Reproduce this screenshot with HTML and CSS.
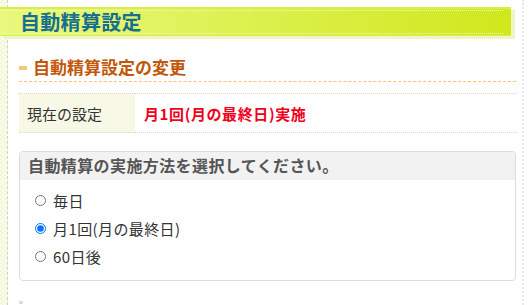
FILE: index.html
```html
<!DOCTYPE html>
<html lang="ja">
<head>
<meta charset="utf-8">
<link rel="stylesheet" href="styles.css">
</head>
<body>
<div class="page">
  <div class="side-left"></div>
  <div class="main">
    <div class="title-bar"><h1>自動精算設定</h1></div>
    <div class="content">
      <h2 class="sec-head"><span class="mark"></span>自動精算設定の変更</h2>
      <table class="info">
        <tr><th>現在の設定</th><td>月1回(月の最終日)実施</td></tr>
      </table>
      <div class="box">
        <div class="box-head">自動精算の実施方法を選択してください。</div>
        <div class="box-body">
          <label class="opt"><input type="radio" name="m"> 毎日</label>
          <label class="opt"><input type="radio" name="m" checked> 月1回(月の最終日)</label>
          <label class="opt"><input type="radio" name="m"> 60日後</label>
        </div>
      </div>
      <div class="next"></div>
    </div>
  </div>
  <div class="side-right"></div>
</div>
</body>
</html>
```
FILE: styles.css
```css
html, body { margin: 0; padding: 0; background: #fff; }
body { font-family: "Noto Sans CJK JP", "Noto Sans", sans-serif; color: #333; width: 530px; height: 305px; overflow: hidden; }
.page { display: flex; height: 305px; }
.side-left {
  width: 7px; flex: none;
  background-color: #fbfdee;
  background-image: linear-gradient(45deg, #f2f7d6 25%, transparent 25%, transparent 75%, #f2f7d6 75%), linear-gradient(45deg, #f2f7d6 25%, transparent 25%, transparent 75%, #f2f7d6 75%);
  background-size: 4px 4px; background-position: 0 0, 2px 2px;
  border-right: 1px dashed #cfcfcf;
}
.main { flex: 1; padding-top: 7px; min-width: 0; }
.side-right { width: 5px; flex: none; border-left: 2px dotted #e8e8e8; margin-right: 1px; }
.title-bar {
  margin-left: -8px; width: 511px; height: 29px;
  background: linear-gradient(to right, #e9f87e, #cfe81c);
  box-shadow: 4px 3px 0 #eef5c6;
  position: relative; box-sizing: border-box;
  border-top: 2px solid #d8ee4a; border-bottom: 1px solid #d8ee4a;
}
.title-bar::before, .title-bar::after {
  content: ""; position: absolute; left: 2px; right: 8px; border-top: 1px dotted #f3fbb5;
}
.title-bar::before { top: 1px; }
.title-bar::after { bottom: 1px; }
h1 { margin: 0; padding-left: 20px; font-size: 20px; line-height: 26px; color: #156f90; font-weight: bold; letter-spacing: 0.3px; }
.content { padding: 0 6px 0 11px; }
.sec-head {
  margin: 19px 0 0; font-size: 17px; line-height: 24px; color: #c2570a; font-weight: bold;
  display: flex; align-items: center; padding-bottom: 2px;
  border-bottom: 1px dashed #f0c978;
}
.mark { width: 8px; height: 4px; background: #f7c774; margin: 2px 6px 0 0; display: inline-block; }
.info { width: 100%; border-collapse: collapse; margin-top: 11px; }
.info th, .info td { border-top: 1px dotted #d8d8c8; border-bottom: 1px dotted #d8d8c8; height: 38px; padding: 0; }
.info th { width: 108px; background: #f7f9e6; text-align: left; padding-left: 8px; font-weight: normal; font-size: 15px; color: #333; }
.info td { padding-left: 9px; color: #f0001c; font-weight: bold; font-size: 15px; letter-spacing: 0.6px; }
.box { margin-top: 18px; border: 1px solid #dcdcdc; border-radius: 4px; height: 130px; box-sizing: border-box; overflow: hidden; }
.box-head { background: #f2f2f2; height: 28px; line-height: 26px; padding-left: 8px; font-weight: bold; font-size: 16px; color: #555; letter-spacing: 0.4px; }
.box-body { padding: 6px 0 0 14px; display: flex; flex-direction: column; }
.opt { display: flex; align-items: center; height: 28px; font-size: 15px; color: #333; letter-spacing: 0.4px; }
.opt input { margin: 0 7px 0 1px; width: 11px; height: 11px; }
.next { margin-top: 20px; width: 4px; height: 3px; background: #ddd; }
```
